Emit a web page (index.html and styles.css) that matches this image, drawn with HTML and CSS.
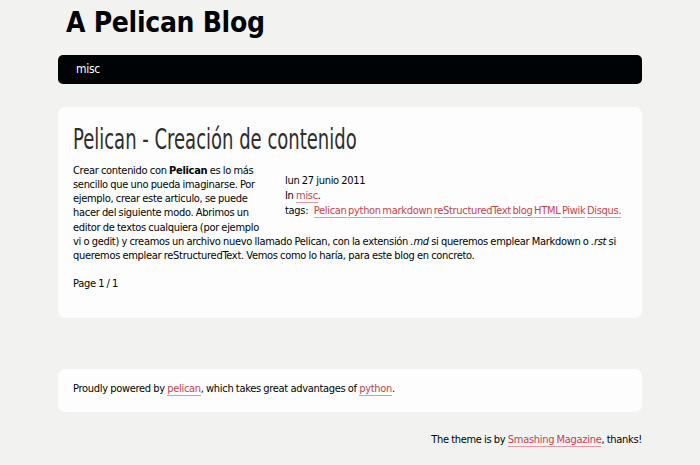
FILE: index.html
```html
<!DOCTYPE html>
<html lang="es">
<head>
<meta charset="utf-8">
<title>A Pelican Blog</title>
<link rel="stylesheet" href="styles.css">
</head>
<body>
<div class="page">
  <header class="banner">
    <h1 class="site-title">A Pelican Blog</h1>
    <nav class="menu"><a href="#" class="menu-item">misc</a></nav>
  </header>

  <section class="article">
    <h2 class="entry-title"><span class="entry-title-text">Pelican - Creación de contenido</span></h2>
    <div class="entry">
      <aside class="post-info">
        <div class="info-line">lun 27 junio 2011</div>
        <div class="info-line">In <a href="#" class="link">misc</a>.</div>
        <div class="info-line tags">tags: <a href="#" class="link">Pelican</a><a href="#" class="link">python</a><a href="#" class="link">markdown</a><a href="#" class="link">reStructuredText</a><a href="#" class="link">blog</a><a href="#" class="link">HTML</a><a href="#" class="link">Piwik</a><a href="#" class="link">Disqus.</a></div>
      </aside>
      <p class="text">Crear contenido con <strong>Pelican</strong> es lo más sencillo que uno pueda imaginarse. Por ejemplo, crear este articulo, se puede hacer del siguiente modo. Abrimos un editor de textos cualquiera (por ejemplo vi o gedit) y creamos un archivo nuevo llamado Pelican, con la extensión <em>.md</em> si queremos emplear Markdown o <em>.rst</em> si queremos emplear reStructuredText. Vemos como lo haría, para este blog en concreto.</p>
      <p class="text">Page 1 / 1</p>
    </div>
  </section>

  <footer class="contentinfo">
    <p class="text">Proudly powered by <a href="#" class="link">pelican</a>, which takes great advantages of <a href="#" class="link">python</a>.</p>
  </footer>

  <p class="credits">The theme is by <a href="#" class="link">Smashing Magazine</a>, thanks!</p>
</div>
</body>
</html>
```
FILE: styles.css
```css
html, body {
  margin: 0;
  padding: 0;
  background: #f2f3f1;
}
body {
  color: #000305;
  font-family: "DejaVu Sans Condensed", "DejaVu Sans", sans-serif;
  font-size: 11px;
  letter-spacing: -0.3px;
  word-spacing: -0.4px;
  line-height: 14.3px;
}
.page {
  width: 584px;
  margin: 0 auto;
}
.site-title {
  margin: 3px 0 0 8px;
  font-family: "DejaVu Sans Condensed", "DejaVu Sans", sans-serif;
  font-weight: bold;
  font-size: 28px;
  line-height: 40px;
  letter-spacing: -0.3px;
  word-spacing: 0;
  color: #000305;
}
.menu {
  margin-top: 12px;
  height: 29px;
  background: #000305;
  border-radius: 5px;
  display: flex;
  align-items: center;
  padding-left: 18px;
}
.menu-item {
  color: #ffffff;
  text-decoration: none;
  font-size: 12px;
  letter-spacing: -0.3px;
}
.article {
  margin-top: 23px;
  background: #fcfdfc;
  border-radius: 7px;
  padding: 14px 15px 27px;
}
.entry-title {
  margin: 0;
  height: 36px;
  font-weight: normal;
  font-size: 29px;
  line-height: 36px;
  letter-spacing: 0;
  word-spacing: 0;
  color: #2e2e2e;
  white-space: nowrap;
}
.entry-title-text {
  display: inline-block;
  transform: scaleX(0.69);
  transform-origin: 0 0;
}
.entry {
  margin-top: 6.5px;
}
.text {
  margin: 0 0 13px;
}
.text:last-child {
  margin-bottom: 0;
}
.post-info {
  float: right;
  width: 342px;
  margin: 9px 0 8px 20px;
  line-height: 15px;
}
.tags {
  white-space: nowrap;
}
.link {
  color: #c74350;
  text-decoration: none;
  border-bottom: 1px solid #e09aa2;
}
.post-info .link + .link {
  margin-left: 1.5px;
}
.post-info .tags .link:first-child {
  margin-left: 3px;
}
.contentinfo {
  margin-top: 51px;
  background: #fcfdfc;
  border-radius: 7px;
  padding: 13px 15px 16px;
}
.credits {
  margin: 21px 0 0;
  text-align: right;
}
```
